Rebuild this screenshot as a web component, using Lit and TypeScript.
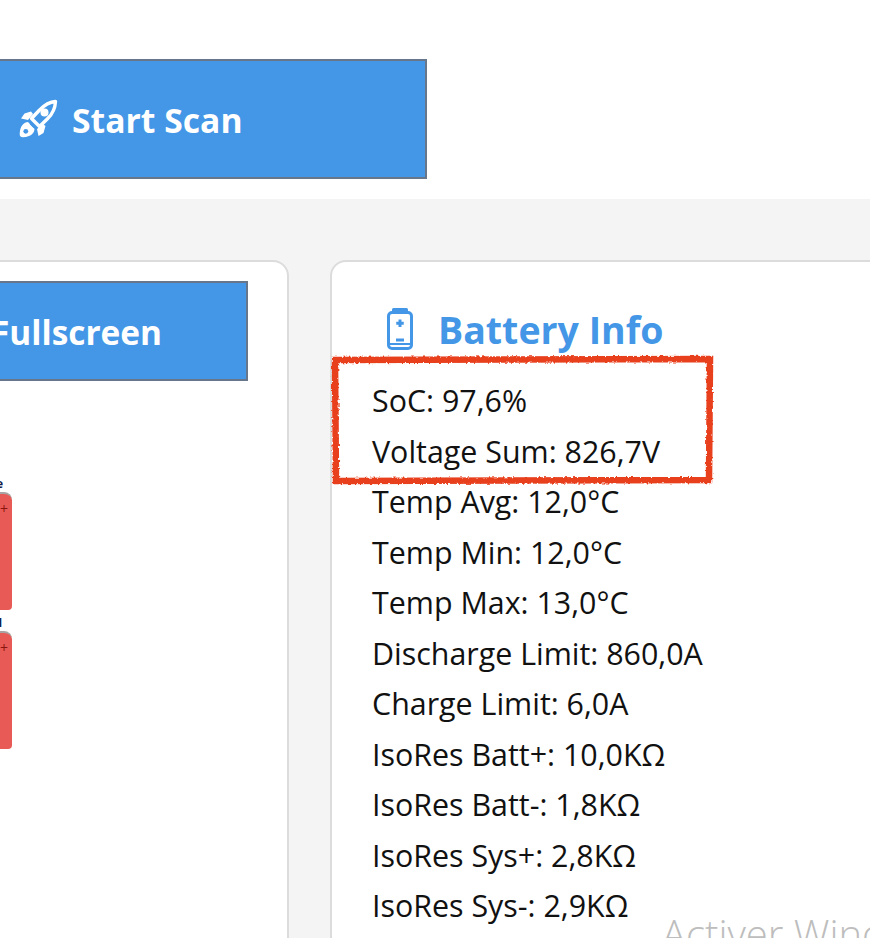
import { LitElement, html, css } from "lit";
import { customElement } from "lit/decorators.js";

const ROWS = [
  "SoC: 97,6%",
  "Voltage Sum: 826,7V",
  "Temp Avg: 12,0°C",
  "Temp Min: 12,0°C",
  "Temp Max: 13,0°C",
  "Discharge Limit: 860,0A",
  "Charge Limit: 6,0A",
  "IsoRes Batt+: 10,0KΩ",
  "IsoRes Batt-: 1,8KΩ",
  "IsoRes Sys+: 2,8KΩ",
  "IsoRes Sys-: 2,9KΩ",
];

@customElement("app-root")
export class AppRoot extends LitElement {
  static styles = css`
    :host {
      display: block;
      position: relative;
      width: 870px;
      height: 938px;
      overflow: hidden;
      background: #fff;
      font-family: "Open Sans", "Noto Sans", sans-serif;
      color: #111;
    }
    .top {
      height: 199px;
      padding-top: 59px;
      box-sizing: border-box;
    }
    .btn {
      display: flex;
      align-items: center;
      box-sizing: border-box;
      background: #4497e6;
      border: 2px solid #67768a;
      color: #fff;
      font-weight: 700;
      white-space: nowrap;
    }
    .btn span {
      padding-top: 2px;
    }
    .scan {
      width: 447px;
      height: 120px;
      margin-left: -20px;
      padding-left: 35px;
      gap: 13px;
      font-size: 33.7px;
    }
    .main {
      display: flex;
      gap: 41px;
      height: 739px;
      padding-top: 61px;
      box-sizing: border-box;
      background: #f4f4f4;
    }
    .card {
      flex: none;
      box-sizing: border-box;
      height: 760px;
      background: #fff;
      border: 2px solid #dcdcdc;
      border-radius: 16px;
    }
    .left {
      width: 329px;
      margin-left: -40px;
      padding-top: 19px;
    }
    .full {
      width: 286px;
      height: 100px;
      justify-content: flex-end;
      padding-right: 84px;
      font-size: 33.4px;
    }
    .cells {
      display: flex;
      flex-direction: column;
      gap: 4px;
      margin-top: 94px;
    }
    .cell-wrap {
      width: 50px;
      height: 135px;
    }
    .cell-label {
      height: 17px;
      font-size: 12px;
      font-weight: 700;
      line-height: 17px;
      text-align: right;
      color: #10204a;
      padding-right: 9px;
      box-sizing: border-box;
      overflow: hidden;
    }
    .cell {
      height: 118px;
      box-sizing: border-box;
      background: #e85a55;
      border-top: 2px solid #a9a4a4;
      border-radius: 8px 8px 4px 4px;
      color: #8c1410;
      font-size: 14px;
      line-height: 29px;
      text-align: right;
      padding-right: 4px;
    }
    .right {
      width: 640px;
      padding: 37px 0 0 40px;
    }
    h2 {
      display: flex;
      align-items: center;
      gap: 25px;
      margin: 0 0 17px 15px;
      height: 60px;
      color: #4497e6;
      font-size: 37.5px;
      font-weight: 700;
    }
    .rows {
      display: flex;
      flex-direction: column;
    }
    .row {
      height: 50.5px;
      line-height: 50.5px;
      font-size: 30.4px;
      white-space: nowrap;
    }
    .mark {
      position: absolute;
      left: 328px;
      top: 352px;
      pointer-events: none;
    }
    .wm {
      position: absolute;
      left: 662px;
      top: 908px;
      font-size: 40px;
      font-weight: 300;
      line-height: 52px;
      color: #bdbdbd;
      white-space: nowrap;
    }
  `;

  render() {
    return html`
      <div class="top">
        <div class="btn scan">
          <svg width="42" height="42" viewBox="0 0 42 42" fill="none">
            <path d="M38.500 3.500c-.3 6.500-3.200 12.700-8 17.300l-8 7.700-8-8 7.600-8C26.700 7.700 32 3.800 38.500 3.500Z" stroke="#fff" stroke-width="3.400" stroke-linejoin="round"/>
            <circle cx="27.500" cy="14.500" r="4" fill="#fff"/>
            <path d="M14 13.500 7.500 15.500 4 20.500l7 1.500 5-6ZM28.500 28l-2 7-5 3-1.500-7 6-5Z" fill="#fff"/>
            <path d="M11 24c-4 .3-8 3.500-8.300 12-.1 2.300 1.300 3.300 3.500 3.200 8-.5 11-4 11.300-8.200Z" fill="#fff"/>
            <circle cx="8.800" cy="33.300" r="2.400" fill="#4497e6"/>
            <path d="M13.500 25.500l3.500 3.500" stroke="#4497e6" stroke-width="1.800"/>
          </svg>
          <span>Start Scan</span>
        </div>
      </div>
      <div class="main">
        <div class="card left">
          <div class="btn full"><span>Fullscreen</span></div>
          <div class="cells">
            ${["e", "1"].map(
              (l) => html`<div class="cell-wrap">
                <div class="cell-label">${l}</div>
                <div class="cell">+</div>
              </div>`
            )}
          </div>
        </div>
        <div class="card right">
          <h2>
            <svg width="26" height="42" viewBox="0 0 26 42" fill="none" stroke="#4497e6" stroke-width="3">
              <rect x="1.500" y="4.500" width="23" height="36" rx="3.500"/>
              <path d="M6.500 4.500V1.500h13v3" stroke-linejoin="round"/>
              <path d="M2 36h22" stroke-width="2"/>
              <path d="M13 11.500v7.500M9.250 15.250h7.500M9 32h8"/>
            </svg>
            <span>Battery Info</span>
          </h2>
          <div class="rows">
            ${ROWS.map((r) => html`<div class="row">${r}</div>`)}
          </div>
        </div>
      </div>
      <svg class="mark" width="392" height="138" viewBox="0 0 392 138" fill="none">
        <defs>
          <filter id="rough" x="-5%" y="-10%" width="110%" height="120%">
            <feTurbulence type="fractalNoise" baseFrequency="0.35" numOctaves="2" seed="4"/>
            <feDisplacementMap in="SourceGraphic" scale="3.500"/>
          </filter>
        </defs>
        <path d="M7 8 382 7 381 128 8 129Z" stroke="#e8401f" stroke-width="6.500" filter="url(#rough)"/>
      </svg>
      <div class="wm">Activer Windows</div>
    `;
  }
}
